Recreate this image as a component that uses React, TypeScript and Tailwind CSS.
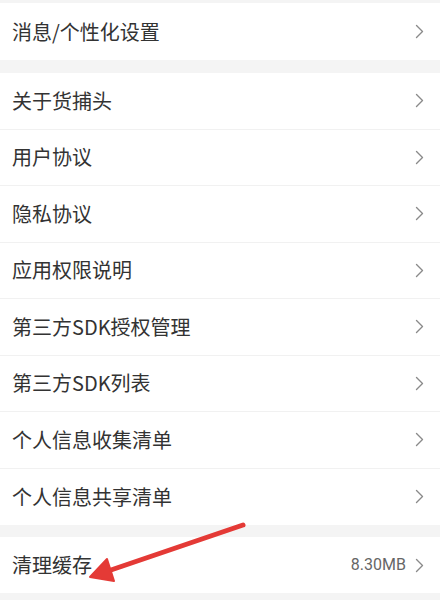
import React from 'react';

const mainItems = [
    '关于货捕头',
    '用户协议',
    '隐私协议',
    '应用权限说明',
    '第三方SDK授权管理',
    '第三方SDK列表',
    '个人信息收集清单',
    '个人信息共享清单',
];

const Chevron = () => (
    <svg width="9" height="15" viewBox="0 0 9 15" className="shrink-0">
        <polyline points="1.5,1.5 7.5,7.5 1.5,13.5" fill="none" stroke="#8a8a8a" strokeWidth="1.4" strokeLinecap="round" strokeLinejoin="round" />
    </svg>
);

interface RowProps {
    label: string;
    value?: string;
    divider?: boolean;
    height: string;
}

const Row: React.FC<RowProps> = ({ label, value, divider, height }) => (
    <div className={`flex items-center justify-between bg-white pl-3 pr-4 ${height} ${divider ? 'border-b border-[#f1f1f1]' : ''}`}>
        <span className="text-[20px] leading-none text-[#333333]">{label}</span>
        <div className="flex items-center gap-[9px]">
            {value && <span className="text-[16px] leading-none text-[#666666] font-['Roboto',sans-serif]">{value}</span>}
            <Chevron />
        </div>
    </div>
);

export default function App() {
    return (
        <div className="relative w-[440px] h-[600px] overflow-hidden bg-[#f4f4f4] pt-[3px] font-['Noto_Sans_CJK_SC','Noto_Sans',sans-serif]">
            {/* 第一组 */}
            <Row label="消息/个性化设置" height="h-[57px]" />

            {/* 第二组 */}
            <div className="mt-[13px]">
                {mainItems.map((item, i) => (
                    <Row key={item} label={item} height="h-[56.5px]" divider={i < mainItems.length - 1} />
                ))}
            </div>

            {/* 第三组 */}
            <div className="mt-[12px]">
                <Row label="清理缓存" value="8.30MB" height="h-[56px]" />
            </div>

            {/* 红色箭头 */}
            <svg className="absolute left-0 top-0 pointer-events-none" width="440" height="600" viewBox="0 0 440 600">
                <line x1="243" y1="525" x2="108" y2="571" stroke="#e43a36" strokeWidth="5" strokeLinecap="round" />
                <polygon points="90,577 107,559 114,581" fill="#e43a36" stroke="#e43a36" strokeWidth="2" strokeLinejoin="round" />
            </svg>
        </div>
    );
}
